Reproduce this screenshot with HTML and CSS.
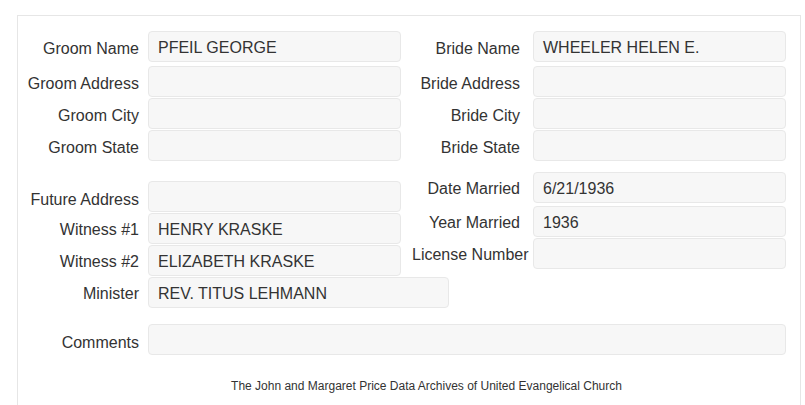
FILE: index.html
```html
<!DOCTYPE html>
<html lang="en">
<head>
<meta charset="utf-8">
<title>Marriage Record</title>
<link rel="stylesheet" href="styles.css">
</head>
<body>
<div class="panel">
  <div class="top">
    <div class="pair first"><div class="lbl lbl-l">Groom Name</div><div class="field">PFEIL GEORGE</div></div>
    <div class="pair first"><div class="lbl lbl-r">Bride Name</div><div class="field">WHEELER HELEN E.</div></div>
    <div class="pair"><div class="lbl lbl-l">Groom Address</div><div class="field"></div></div>
    <div class="pair"><div class="lbl lbl-r">Bride Address</div><div class="field"></div></div>
    <div class="pair"><div class="lbl lbl-l">Groom City</div><div class="field"></div></div>
    <div class="pair"><div class="lbl lbl-r">Bride City</div><div class="field"></div></div>
    <div class="pair"><div class="lbl lbl-l">Groom State</div><div class="field"></div></div>
    <div class="pair"><div class="lbl lbl-r">Bride State</div><div class="field"></div></div>
  </div>
  <div class="lower">
    <div class="col-left">
      <div class="pair future"><div class="lbl lbl-l">Future Address</div><div class="field"></div></div>
      <div class="pair"><div class="lbl lbl-l">Witness #1</div><div class="field">HENRY KRASKE</div></div>
      <div class="pair"><div class="lbl lbl-l">Witness #2</div><div class="field">ELIZABETH KRASKE</div></div>
      <div class="pair"><div class="lbl lbl-l">Minister</div><div class="field field-wide">REV. TITUS LEHMANN</div></div>
    </div>
    <div class="col-right">
      <div class="pair date"><div class="lbl lbl-r">Date Married</div><div class="field">6/21/1936</div></div>
      <div class="pair"><div class="lbl lbl-r">Year Married</div><div class="field">1936</div></div>
      <div class="pair"><div class="lbl lbl-r">License Number</div><div class="field"></div></div>
    </div>
  </div>
  <div class="pair comments"><div class="lbl lbl-l">Comments</div><div class="field field-full"></div></div>
  <div class="footer">The John and Margaret Price Data Archives of United Evangelical Church</div>
</div>
</body>
</html>
```

FILE: styles.css
```css
html, body {
  height: 100%;
  overflow: hidden;
}
body {
  margin: 0;
  background: #ffffff;
  font-family: "Liberation Sans", Arial, sans-serif;
  font-size: 16px;
  color: #333333;
}
.panel {
  box-sizing: border-box;
  width: 784px;
  height: 390px;
  margin: 15px 0 0 17px;
  border: 1px solid #e6e6e6;
  border-bottom: 0;
  padding: 15px 14px 0 0;
}
.top {
  display: grid;
  grid-template-columns: 383px 374px;
  column-gap: 11px;
  row-gap: 1px;
}
.pair {
  display: flex;
  align-items: flex-start;
}
.pair.first {
  margin-bottom: 3px;
}
.lbl {
  box-sizing: border-box;
  flex: none;
  height: 31px;
  line-height: 31px;
  padding-top: 1px;
  text-align: right;
  white-space: nowrap;
}
.top .lbl {
  padding-top: 2px;
}
.lbl-l {
  width: 121px;
  margin-right: 9px;
}
.lbl-r {
  width: 108px;
  margin-right: 13px;
}
.field {
  box-sizing: border-box;
  flex: none;
  width: 253px;
  height: 31px;
  padding: 2px 9px 0;
  line-height: 27px;
  background: #f7f7f7;
  border: 1px solid #e8e8e8;
  border-radius: 4px;
  color: #333333;
  white-space: nowrap;
  overflow: hidden;
}
.field-wide {
  width: 301px;
}
.field-full {
  width: 638px;
}
.lower {
  display: flex;
  align-items: flex-start;
  margin-top: 11px;
}
.col-left {
  width: 383px;
  margin-top: 9px;
  display: flex;
  flex-direction: column;
  gap: 1px;
}
.col-right {
  margin-left: 11px;
  display: flex;
  flex-direction: column;
  gap: 1px;
}
.pair.date {
  margin-bottom: 2px;
}
.future .lbl {
  padding-top: 3px;
}
.comments {
  margin-top: 16px;
}
.comments .lbl {
  padding-top: 3px;
}
.footer {
  margin-top: 24px;
  padding-left: 49px;
  text-align: center;
  font-size: 12px;
  line-height: 14px;
  color: #333333;
}
```
